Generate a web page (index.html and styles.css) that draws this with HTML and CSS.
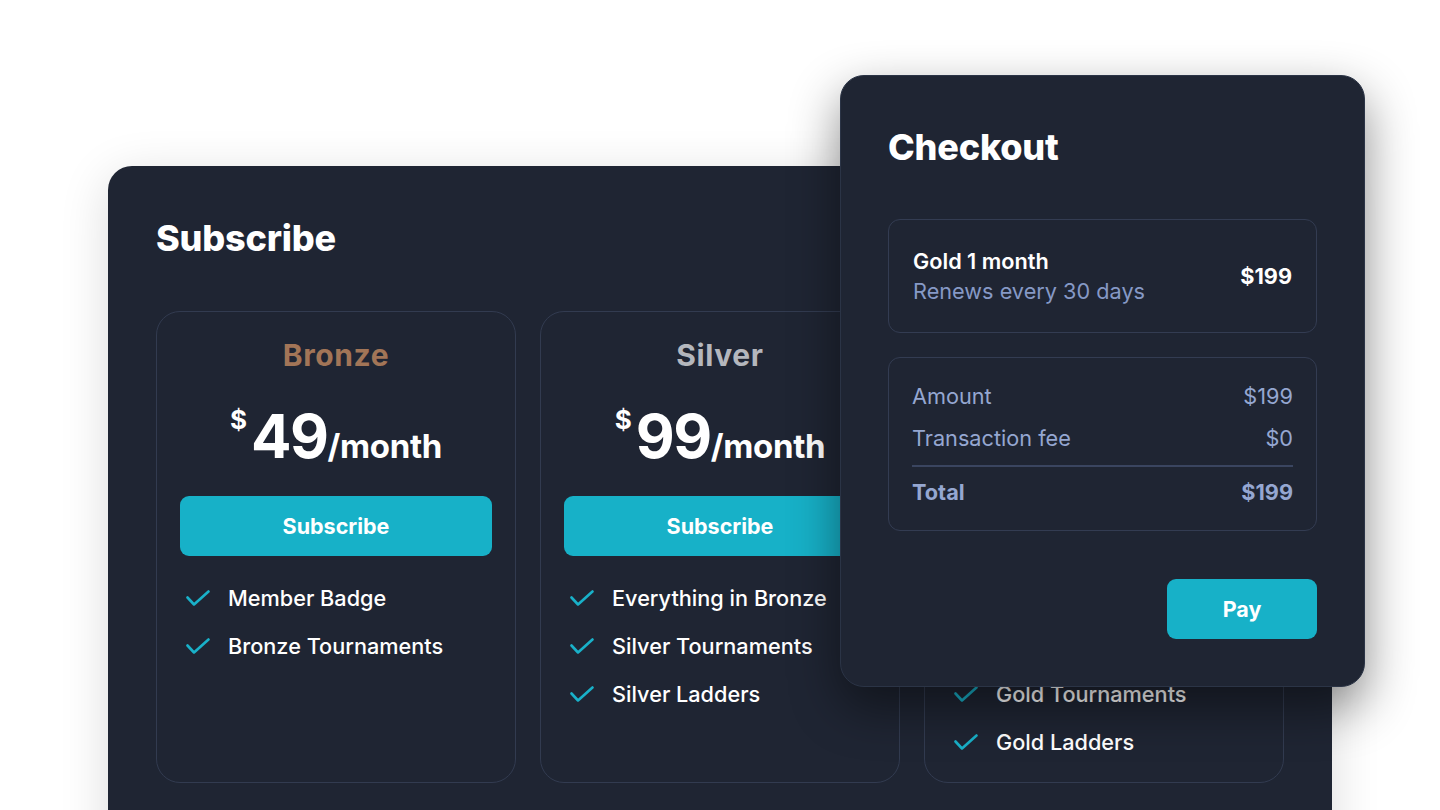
FILE: index.html
```html
<!DOCTYPE html>
<html lang="en">
<head>
<meta charset="utf-8">
<title>Subscribe</title>
<link rel="stylesheet" href="styles.css">
</head>
<body>
<div class="stage">
  <section class="panel">
    <h1 class="heading">Subscribe</h1>
    <div class="plans">
      <div class="plan">
        <h2 class="plan-name bronze">Bronze</h2>
        <div class="price"><span class="cur">$</span><span class="amt">49</span><span class="per">/month</span></div>
        <button class="btn">Subscribe</button>
        <ul class="features">
          <li><svg class="check" viewBox="0 0 24 17"><polyline points="1.5,7.5 8,14.5 22.5,1.5"/></svg>Member Badge</li>
          <li><svg class="check" viewBox="0 0 24 17"><polyline points="1.5,7.5 8,14.5 22.5,1.5"/></svg>Bronze Tournaments</li>
        </ul>
      </div>
      <div class="plan">
        <h2 class="plan-name silver">Silver</h2>
        <div class="price"><span class="cur">$</span><span class="amt">99</span><span class="per">/month</span></div>
        <button class="btn">Subscribe</button>
        <ul class="features">
          <li><svg class="check" viewBox="0 0 24 17"><polyline points="1.5,7.5 8,14.5 22.5,1.5"/></svg>Everything in Bronze</li>
          <li><svg class="check" viewBox="0 0 24 17"><polyline points="1.5,7.5 8,14.5 22.5,1.5"/></svg>Silver Tournaments</li>
          <li><svg class="check" viewBox="0 0 24 17"><polyline points="1.5,7.5 8,14.5 22.5,1.5"/></svg>Silver Ladders</li>
        </ul>
      </div>
      <div class="plan">
        <h2 class="plan-name gold">Gold</h2>
        <div class="price"><span class="cur">$</span><span class="amt">199</span><span class="per">/month</span></div>
        <button class="btn">Subscribe</button>
        <ul class="features">
          <li><svg class="check" viewBox="0 0 24 17"><polyline points="1.5,7.5 8,14.5 22.5,1.5"/></svg>Everything in Silver</li>
          <li><svg class="check" viewBox="0 0 24 17"><polyline points="1.5,7.5 8,14.5 22.5,1.5"/></svg>Gold Badge</li>
          <li><svg class="check" viewBox="0 0 24 17"><polyline points="1.5,7.5 8,14.5 22.5,1.5"/></svg>Gold Tournaments</li>
          <li><svg class="check" viewBox="0 0 24 17"><polyline points="1.5,7.5 8,14.5 22.5,1.5"/></svg>Gold Ladders</li>
        </ul>
      </div>
    </div>
  </section>

  <section class="checkout">
    <h1 class="heading">Checkout</h1>
    <div class="box item">
      <div class="item-info">
        <div class="item-title">Gold 1 month</div>
        <div class="item-sub">Renews every 30 days</div>
      </div>
      <div class="item-price">$199</div>
    </div>
    <div class="box summary">
      <div class="row"><span>Amount</span><span>$199</span></div>
      <div class="row"><span>Transaction fee</span><span>$0</span></div>
      <div class="divider"></div>
      <div class="row total"><span>Total</span><span>$199</span></div>
    </div>
    <div class="actions">
      <button class="btn pay">Pay</button>
    </div>
  </section>
</div>
</body>
</html>
```

FILE: styles.css
```css
* { box-sizing: border-box; }

html, body {
  margin: 0;
  padding: 0;
  background: #ffffff;
  width: 1440px;
  height: 810px;
  overflow: hidden;
  font-family: "Inter", "Noto Sans", sans-serif;
  color: #ffffff;
}

.stage {
  position: relative;
  width: 1440px;
  height: 810px;
  padding: 166px 0 0 108px;
}

.panel {
  width: 1224px;
  height: 700px;
  background: #1f2533;
  border-radius: 24px;
  padding: 48px;
  box-shadow: 0 10px 50px rgba(0, 0, 0, 0.14);
}

.heading {
  margin: 0;
  font-size: 36px;
  line-height: 48px;
  font-weight: 800;
  letter-spacing: -0.2px;
  color: #ffffff;
}

.plans {
  display: grid;
  grid-template-columns: repeat(3, 1fr);
  gap: 24px;
  margin-top: 49px;
  height: 472px;
}

.plan {
  border: 1px solid #323b50;
  border-radius: 24px;
  padding: 23px 23px;
  display: flex;
  flex-direction: column;
  align-items: stretch;
}

.plan-name {
  margin: 0;
  text-align: center;
  font-size: 30px;
  line-height: 40px;
  font-weight: 700;
  letter-spacing: 0.6px;
}
.bronze { color: #a27557; }
.silver { color: #b4b7bd; }
.gold { color: #d6ad45; }

.price {
  display: flex;
  justify-content: center;
  align-items: baseline;
  margin-top: 26px;
  height: 70px;
  line-height: 70px;
}
.cur {
  font-size: 26px;
  font-weight: 700;
  align-self: flex-start;
  line-height: 30px;
  margin-top: 4px;
  margin-right: 4px;
}
.amt {
  font-size: 60px;
  font-weight: 700;
  letter-spacing: -1.5px;
}
.per {
  font-size: 33px;
  font-weight: 700;
  letter-spacing: -0.3px;
}

.btn {
  display: block;
  border: none;
  background: #17b1c8;
  color: #ffffff;
  font-family: "Inter", "Noto Sans", sans-serif;
  font-size: 21.5px;
  font-weight: 700;
  letter-spacing: 0;
  height: 60px;
  border-radius: 9px;
  padding: 0;
}

.plan .btn {
  margin-top: 25px;
  width: 100%;
}

.features {
  list-style: none;
  margin: 26px 0 0;
  padding: 0;
  display: flex;
  flex-direction: column;
  gap: 16px;
}
.features li {
  display: flex;
  align-items: center;
  height: 32px;
  font-size: 21.7px;
  font-weight: 500;
  letter-spacing: 0;
  color: #ffffff;
}
.check {
  width: 24px;
  height: 17px;
  margin: 0 18px 0 6px;
  flex: none;
}
.check polyline {
  fill: none;
  stroke: #19b1c9;
  stroke-width: 2.6;
  stroke-linecap: round;
  stroke-linejoin: round;
}

.checkout {
  position: absolute;
  left: 840px;
  top: 75px;
  width: 525px;
  height: 612px;
  background: #1f2533;
  border: 1px solid #2b3446;
  border-radius: 24px;
  padding: 47px;
  box-shadow: 0 20px 50px rgba(0, 0, 0, 0.46);
}

.box {
  border: 1px solid #333c52;
  border-radius: 12px;
}

.item {
  margin-top: 48px;
  height: 114px;
  padding: 0 24px;
  display: flex;
  align-items: center;
  justify-content: space-between;
}
.item-title {
  font-size: 21.7px;
  line-height: 30px;
  font-weight: 600;
  letter-spacing: 0;
}
.item-sub {
  font-size: 21.7px;
  line-height: 30px;
  font-weight: 400;
  color: #8699c6;
  letter-spacing: 0;
}
.item-price {
  font-size: 21.7px;
  font-weight: 700;
  letter-spacing: 0;
}

.summary {
  margin-top: 24px;
  height: 174px;
  padding: 23px 23px 0;
  display: flex;
  flex-direction: column;
}
.row {
  display: flex;
  justify-content: space-between;
  font-size: 21.7px;
  line-height: 30px;
  color: #95a7d1;
  letter-spacing: 0;
}
.row + .row { margin-top: 12px; }
.divider {
  height: 2px;
  background: #3a4560;
  margin: 12px 0 10px;
}
.total {
  font-weight: 700;
}

.actions {
  display: flex;
  justify-content: flex-end;
  margin-top: 48px;
}
.pay {
  width: 150px;
}
```
